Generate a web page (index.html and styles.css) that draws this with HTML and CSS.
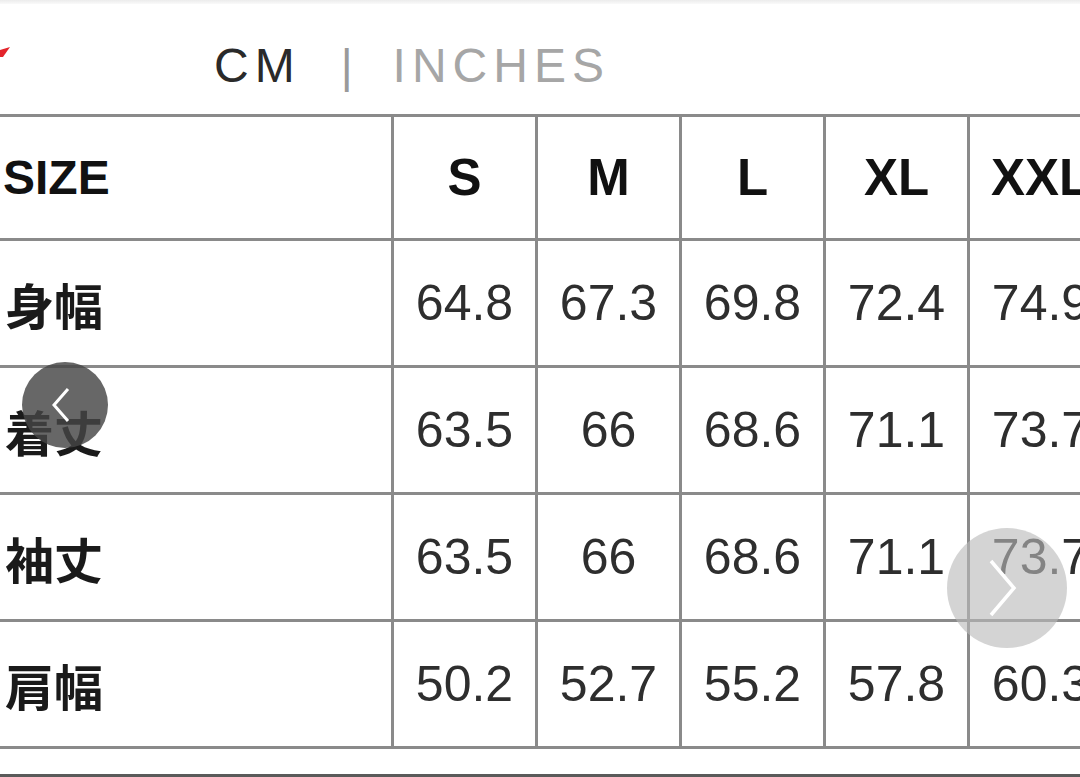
FILE: index.html
```html
<!DOCTYPE html>
<html lang="ja">
<head>
<meta charset="utf-8">
<title>Size chart</title>
<link rel="stylesheet" href="styles.css">
</head>
<body>
<div class="page">
  <div class="topstrip"></div>
  <header class="units">
    <svg class="logo-frag" width="12" height="12" viewBox="0 0 12 12"><polygon points="0,3 10,0 3,10 0,10" fill="#e3242b"/></svg>
    <span class="unit active">CM</span>
    <span class="sep">|</span>
    <span class="unit">INCHES</span>
  </header>
  <div class="chart">
    <table class="sizes">
      <colgroup>
        <col class="c-label">
        <col class="c-size"><col class="c-size"><col class="c-size"><col class="c-size"><col class="c-size">
      </colgroup>
      <thead>
        <tr><th class="label">SIZE</th><th>S</th><th>M</th><th>L</th><th>XL</th><th>XXL</th></tr>
      </thead>
      <tbody>
        <tr><th class="label jp">身幅</th><td>64.8</td><td>67.3</td><td>69.8</td><td>72.4</td><td>74.9</td></tr>
        <tr><th class="label jp">着丈</th><td>63.5</td><td>66</td><td>68.6</td><td>71.1</td><td>73.7</td></tr>
        <tr><th class="label jp">袖丈</th><td>63.5</td><td>66</td><td>68.6</td><td>71.1</td><td>73.7</td></tr>
        <tr><th class="label jp">肩幅</th><td>50.2</td><td>52.7</td><td>55.2</td><td>57.8</td><td>60.3</td></tr>
      </tbody>
    </table>
    <button class="nav prev" aria-label="Previous">
      <svg width="20" height="36" viewBox="0 0 20 36"><polyline points="16,2 2,18 16,34" fill="none" stroke="#fff" stroke-width="3"/></svg>
    </button>
    <button class="nav next" aria-label="Next">
      <svg width="30" height="58" viewBox="0 0 30 58"><polyline points="3,2 26,29 3,56" fill="none" stroke="#fff" stroke-width="3.5"/></svg>
    </button>
  </div>
  <div class="spacer"></div>
  <div class="bottombar"></div>
</div>
</body>
</html>
```

FILE: styles.css
```css
html, body {
  margin: 0;
  padding: 0;
  background: #ffffff;
}
body {
  width: 1080px;
  height: 777px;
  overflow: hidden;
  font-family: "Liberation Sans", Arial, sans-serif;
}
.page {
  display: flex;
  flex-direction: column;
  height: 777px;
}
.topstrip {
  height: 4px;
  background: linear-gradient(#ececec, #fafafa);
}
.units {
  height: 110px;
  box-sizing: border-box;
  padding-top: 38px;
  display: flex;
  align-items: flex-start;
  position: relative;
}
.logo-frag {
  position: absolute;
  left: 0;
  top: 43px;
}
.unit {
  font-size: 48px;
  line-height: 48px;
  letter-spacing: 6px;
  color: #2a2a2a;
}
.unit.active {
  margin-left: 214px;
}
.sep {
  font-size: 46px;
  line-height: 48px;
  color: #9a9a9a;
  margin: 0 40px 0 40px;
}
.unit:last-child {
  color: #a6a6a6;
  letter-spacing: 6px;
}
.chart {
  position: relative;
  flex: 0 0 auto;
}
.sizes {
  border-collapse: collapse;
  table-layout: fixed;
  width: 1114px;
  margin-left: -3px;
}
.c-label { width: 394px; }
.c-size { width: 144px; }
.sizes th,
.sizes td {
  border: 3px solid #8a8a8a;
  text-align: center;
  vertical-align: middle;
  padding: 0;
}
.sizes tbody tr {
  height: 127px;
}
.sizes thead tr { height: 124px; }
.sizes thead th {
  font-size: 51px;
  font-weight: 700;
  color: #111;
}
.sizes th.label {
  text-align: left;
  padding-left: 3px;
  font-size: 48px;
  font-weight: 700;
  color: #111;
}
.sizes th.jp {
  font-family: "Noto Sans CJK JP", "Liberation Sans", sans-serif;
  font-size: 49px;
  padding-left: 5px;
  color: #1a1a1a;
}
.sizes td {
  font-size: 50px;
  color: #2e2e2e;
  white-space: nowrap;
}
.nav {
  position: absolute;
  border: none;
  padding: 0;
  border-radius: 50%;
  display: flex;
  align-items: center;
  justify-content: center;
}
.nav.prev {
  left: 22px;
  top: 248px;
  width: 86px;
  height: 86px;
  background: rgba(70, 70, 70, 0.82);
}
.nav.prev svg { margin-right: 6px; }
.nav.next {
  left: 947px;
  top: 414px;
  width: 120px;
  height: 120px;
  background: rgba(185, 185, 185, 0.62);
}
.nav.next svg { margin-right: 8px; }
.spacer {
  flex: 1 1 auto;
}
.bottombar {
  height: 3px;
  background: #5a5a5a;
}
```
